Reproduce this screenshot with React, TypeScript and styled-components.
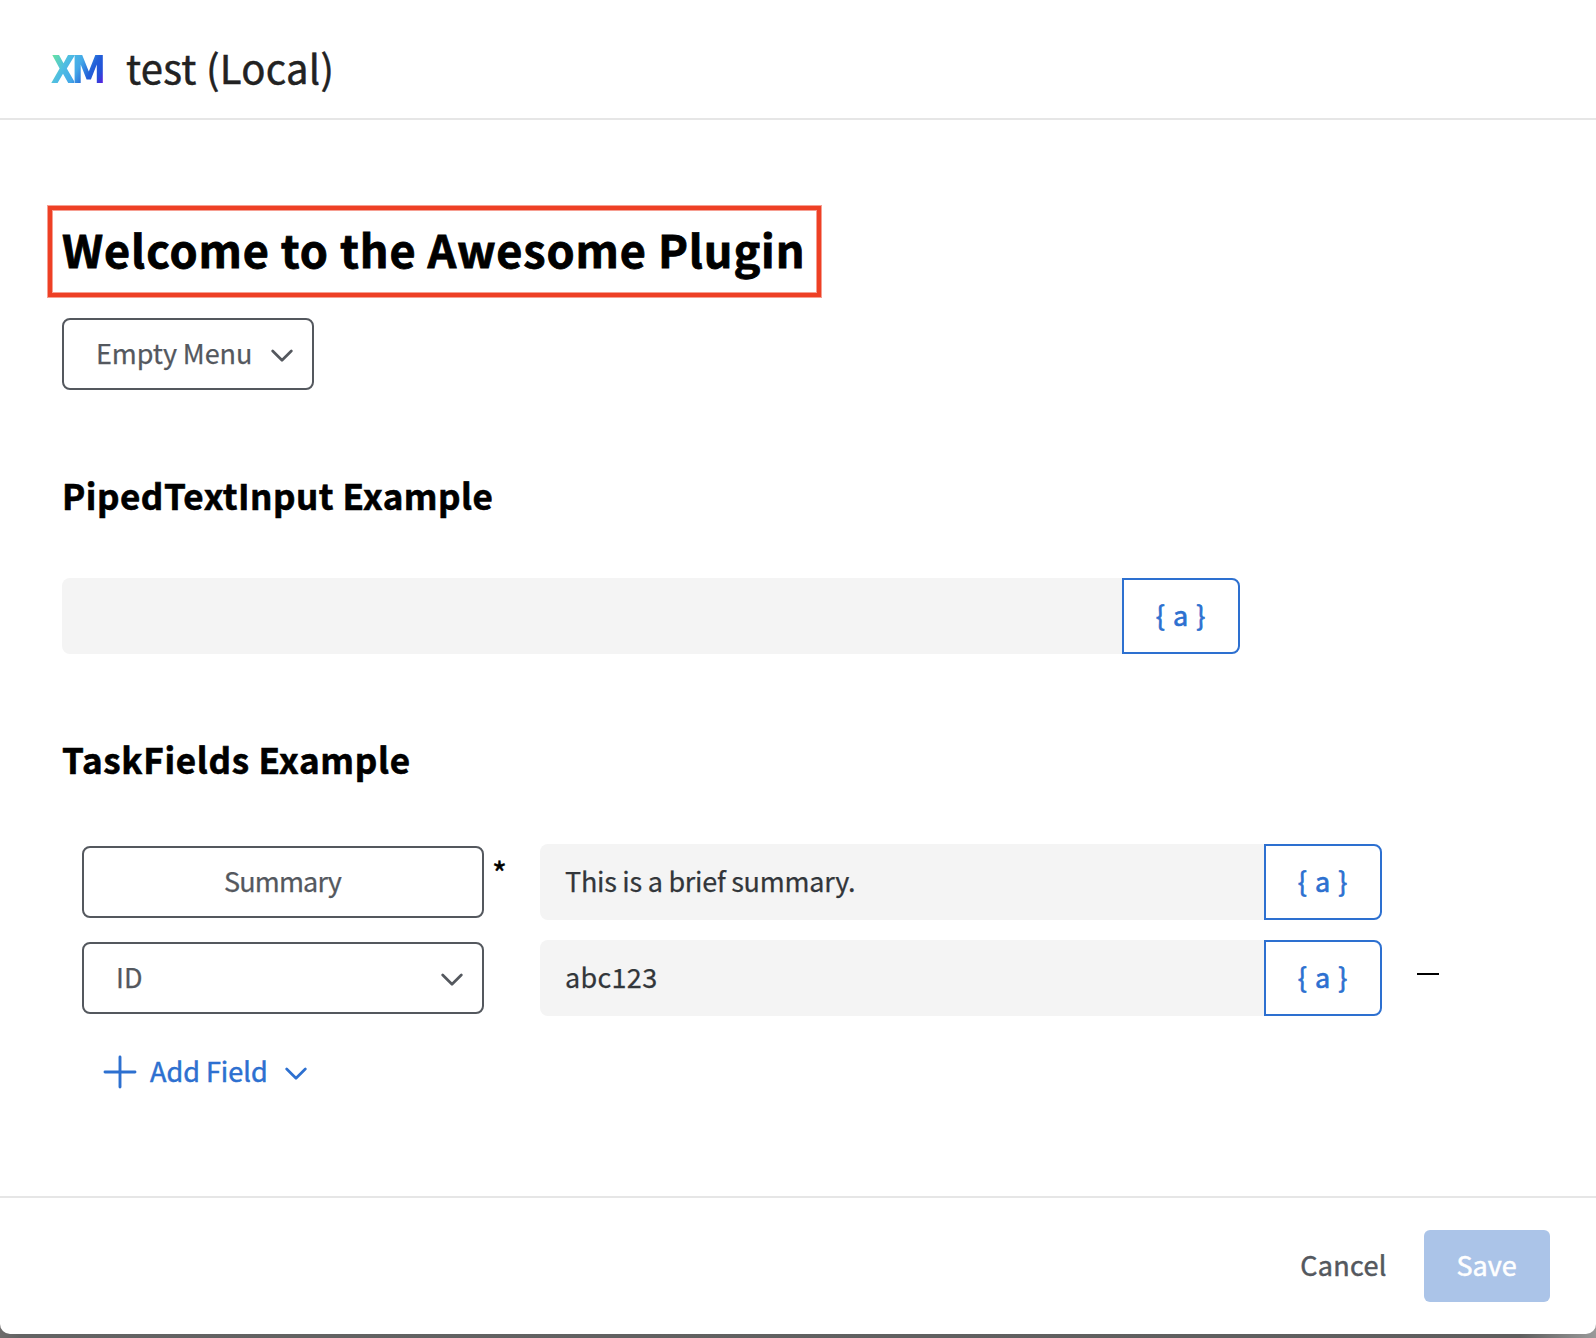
import React from 'react';
import styled, { createGlobalStyle } from 'styled-components';

const Global = createGlobalStyle`
  body { margin: 0; background: #fff; }
  *, *::before, *::after { box-sizing: border-box; }
  button, input { font: inherit; margin: 0; }
`;

const Backdrop = styled.div`
  height: 1338px;
  padding-bottom: 4px;
  background: linear-gradient(90deg, #6e6c6c 0, #636363 20px, #5e5e5e 1520px, #9a9a9a 1596px);
  overflow: hidden;
`;

const Dialog = styled.div`
  display: flex;
  flex-direction: column;
  height: 1334px;
  background: #fff;
  border-radius: 0 0 10px 10px;
  font-family: "Noto Sans CJK SC", "Noto Sans", sans-serif;
  font-size: 27px;
  color: #32363a;
`;

const Header = styled.header`
  display: flex;
  align-items: center;
  height: 120px;
  padding: 15px 0 0 51px;
  border-bottom: 2px solid #e6e6e6;
`;

const Logo = styled.svg`
  width: 54px;
  height: 30px;
  margin-top: 4px;
`;

const Title = styled.h1`
  margin: 0 0 0 21px;
  font-size: 40px;
  font-weight: 400;
  line-height: 50px;
  letter-spacing: 0.28px;
  color: #222;
  -webkit-text-stroke: 0.5px #222;
`;

const Main = styled.main`
  display: flex;
  flex: 1;
  flex-direction: column;
  align-items: flex-start;
  padding: 86px 0 0 62px;
`;

const Highlight = styled.div`
  display: flex;
  align-items: center;
  width: 773px;
  height: 91px;
  margin-left: -14px;
  padding: 0 0 6px 10px;
  border: 4px solid #ee4025;
  box-shadow: 0 0 0 1px rgba(238, 64, 37, 0.5), inset 0 0 0 1px rgba(238, 64, 37, 0.5);
`;

const PageTitle = styled.h2`
  margin: 0;
  font-size: 45px;
  font-weight: 700;
  line-height: 60px;
  letter-spacing: 0.88px;
  white-space: nowrap;
  color: #000;
  -webkit-text-stroke: 0.8px #000;
`;

const SectionTitle = styled.h3<{ $spacing: number }>`
  margin: 82px 0 0;
  padding-top: 1px;
  font-size: 35px;
  font-weight: 700;
  line-height: 43px;
  letter-spacing: ${p => p.$spacing}px;
  color: #000;
  -webkit-text-stroke: 0.6px #000;
`;

const MenuButton = styled.button<{ $width: number; $centered?: boolean }>`
  display: flex;
  align-items: center;
  justify-content: ${p => (p.$centered ? 'center' : 'space-between')};
  width: ${p => p.$width}px;
  height: 72px;
  padding: ${p => (p.$centered ? '0 31px 0 30px' : '0 19px 0 32px')};
  border: 2px solid #54585e;
  border-radius: 8px;
  background: #fff;
  color: #54585e;
  -webkit-text-stroke: 0.25px #54585e;
`;

const Label = styled.span<{ $spacing?: number }>`
  padding-bottom: 3px;
  line-height: 40px;
  letter-spacing: ${p => p.$spacing ?? 0}px;
  white-space: nowrap;
`;

const PipedField = styled.div<{ $width: number }>`
  display: flex;
  width: ${p => p.$width}px;
  height: 76px;
`;

const TextInput = styled.input<{ $spacing?: number }>`
  flex: 1;
  min-width: 0;
  padding: 0 26px 3px 25px;
  border: 0;
  border-radius: 8px 0 0 8px;
  outline: 0;
  background: #f4f4f4;
  color: #32363a;
  letter-spacing: ${p => p.$spacing ?? 0}px;
  -webkit-text-stroke: 0.25px #32363a;
`;

const PipeButton = styled.button`
  width: 118px;
  padding: 0 0 3px;
  border: 2px solid #2d70d0;
  border-radius: 0 8px 8px 0;
  background: #fff;
  color: #2d70d0;
  letter-spacing: 1px;
  -webkit-text-stroke: 0.7px #2d70d0;
`;

const Section = styled.div<{ $top: number }>`
  margin-top: ${p => p.$top}px;
`;

const FieldList = styled(Section)`
  display: grid;
  row-gap: 20px;
  padding-left: 20px;
`;

const FieldRow = styled.div`
  display: grid;
  grid-template-columns: 402px 56px 842px auto;
  align-items: center;
  height: 76px;
`;

const Required = styled.span`
  align-self: start;
  padding: 8px 0 0 8px;
  font-size: 32px;
  line-height: 40px;
  color: #000;
  -webkit-text-stroke: 0.4px #000;
`;

const RemoveButton = styled.button`
  display: flex;
  width: 22px;
  height: 30px;
  margin: 0 0 8px 35px;
  padding: 0;
  align-items: center;
  border: 0;
  background: none;

  &::before {
    content: "";
    width: 22px;
    height: 2px;
    background: #000;
  }
`;

const AddButton = styled.button`
  display: flex;
  align-items: center;
  height: 40px;
  margin: 36px 0 0 41px;
  padding: 0;
  border: 0;
  background: none;
  color: #2d70d0;
  -webkit-text-stroke: 0.5px #2d70d0;

  ${Label} {
    margin: 0 17px 0 13px;
  }
`;

const Footer = styled.footer`
  display: flex;
  align-items: center;
  justify-content: flex-end;
  height: 138px;
  padding: 0 46px 0 0;
  border-top: 2px solid #e6e6e6;
`;

const FooterButton = styled.button<{ $primary?: boolean }>`
  width: ${p => (p.$primary ? 126 : 160)}px;
  height: 72px;
  padding: 0 1px 3px 0;
  border: 0;
  border-radius: 6px;
  background: ${p => (p.$primary ? '#abc4e8' : 'transparent')};
  color: ${p => (p.$primary ? '#fff' : '#54585e')};
  -webkit-text-stroke: 0.5px ${p => (p.$primary ? '#fff' : '#54585e')};
`;

const ChevronIcon = styled.svg`
  width: 22px;
  height: 14px;
  margin-top: 3px;
  flex: none;
`;

function Chevron() {
  return (
    <ChevronIcon viewBox="0 0 22 14" fill="none" stroke="currentColor" strokeWidth="2.7" strokeLinecap="round" strokeLinejoin="round">
      <path d="M1.7 2 11 11.2 20.3 2" />
    </ChevronIcon>
  );
}

function Plus() {
  return (
    <svg width="34" height="34" viewBox="0 0 34 34" fill="none" stroke="currentColor" strokeWidth="2.9" strokeLinecap="round">
      <path d="M17 2v30M2 17h30" />
    </svg>
  );
}

function XmLogo() {
  return (
    <Logo viewBox="0 0 54 30" role="img" aria-label="XM">
      <defs>
        <linearGradient id="xm" x1="2" y1="0" x2="52" y2="28" gradientUnits="userSpaceOnUse">
          <stop offset="0" stopColor="#66e3a0" />
          <stop offset="0.27" stopColor="#4fbde3" />
          <stop offset="0.5" stopColor="#44a8e8" />
          <stop offset="0.72" stopColor="#2260d8" />
          <stop offset="0.88" stopColor="#2350d8" />
          <stop offset="1" stopColor="#5b1fe0" />
        </linearGradient>
      </defs>
      <path fill="url(#xm)" d="M1.3 1H8L12.5 9.2 17 1H24L15.8 14.6 23.2 27.3V29H17.2L12 19.8 6.6 29H.3L8.6 14.6Z" />
      <path fill="url(#xm)" d="M23.6 1H31.2L37.8 17.5 44.3 1H51.8V29H45.8V10.5L39.9 25.5H35.6L29.7 10.5V29H23.6Z" />
    </Logo>
  );
}

function PipedTextInput({ width, value = '', spacing }: { width: number; value?: string; spacing?: number }) {
  return (
    <PipedField $width={width}>
      <TextInput defaultValue={value} $spacing={spacing} />
      <PipeButton>{'{ a }'}</PipeButton>
    </PipedField>
  );
}

export default function App() {
  return (
    <Backdrop>
      <Global />
      <Dialog>
        <Header>
          <XmLogo />
          <Title>test (Local)</Title>
        </Header>
        <Main>
          <Highlight>
            <PageTitle>Welcome to the Awesome Plugin</PageTitle>
          </Highlight>
          <Section $top={21}>
            <MenuButton $width={252}>
              <Label $spacing={-0.1}>Empty Menu</Label>
              <Chevron />
            </MenuButton>
          </Section>

          <SectionTitle $spacing={0.5}>PipedTextInput Example</SectionTitle>
          <Section $top={62}>
            <PipedTextInput width={1178} />
          </Section>

          <SectionTitle $spacing={0.7}>TaskFields Example</SectionTitle>
          <FieldList $top={64}>
            <FieldRow>
              <MenuButton $width={402} $centered>
                <Label $spacing={-0.85}>Summary</Label>
              </MenuButton>
              <Required>*</Required>
              <PipedTextInput width={842} value="This is a brief summary." spacing={-0.26} />
            </FieldRow>
            <FieldRow>
              <MenuButton $width={402}>
                <Label>ID</Label>
                <Chevron />
              </MenuButton>
              <span />
              <PipedTextInput width={842} value="abc123" spacing={0.3} />
              <RemoveButton aria-label="Remove field" />
            </FieldRow>
          </FieldList>
          <AddButton>
            <Plus />
            <Label>Add Field</Label>
            <Chevron />
          </AddButton>
        </Main>
        <Footer>
          <FooterButton>
            <Label $spacing={0.3}>Cancel</Label>
          </FooterButton>
          <FooterButton $primary>
            <Label>Save</Label>
          </FooterButton>
        </Footer>
      </Dialog>
    </Backdrop>
  );
}
